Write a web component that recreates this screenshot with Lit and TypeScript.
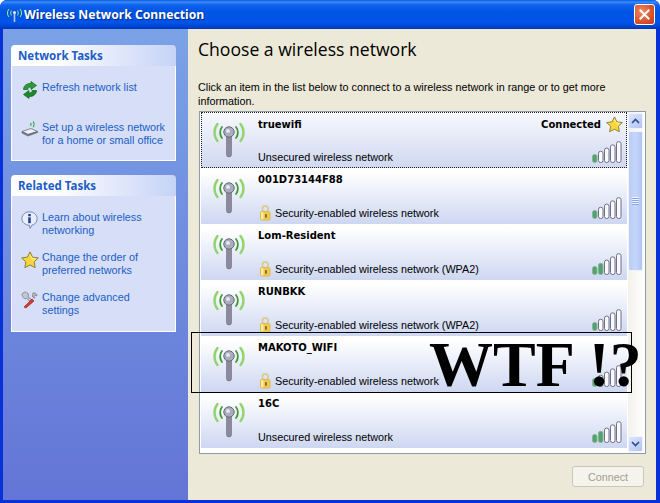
import { LitElement, html, css, svg } from "lit";
import { customElement } from "lit/decorators.js";

const nets = [
  { name: "truewifi", desc: "Unsecured wireless network", lock: false, bars: 1, selected: true },
  { name: "001D73144F88", desc: "Security-enabled wireless network", lock: true, bars: 1 },
  { name: "Lom-Resident", desc: "Security-enabled wireless network (WPA2)", lock: true, bars: 2 },
  { name: "RUNBKK", desc: "Security-enabled wireless network (WPA2)", lock: true, bars: 1 },
  { name: "MAKOTO_WIFI", desc: "Security-enabled wireless network", lock: true, bars: 1 },
  { name: "16C", desc: "Unsecured wireless network", lock: false, bars: 2 },
];

const antenna = html`<svg class="ant" width="36" height="40" viewBox="0 0 36 40">
  <g fill="none" stroke="#8fd46e" stroke-width="2.4" stroke-linecap="round">
    <path d="M6.500 5C2.500 10 2.500 17 6.500 22" /><path d="M29.500 5C33.500 10 33.500 17 29.500 22" />
  </g>
  <g fill="none" stroke="#3f9a2c" stroke-width="1.800" stroke-linecap="round">
    <path d="M11 8C8.500 11 8.500 16 11 19" /><path d="M25 8C27.500 11 27.500 16 25 19" />
  </g>
  <rect x="15.500" y="14" width="5" height="24" rx="2.500" fill="#8a8a9c" stroke="#6b6b80" stroke-width=".6"/>
  <circle cx="18" cy="13" r="5.200" fill="#a9adbd" stroke="#66667c"/>
  <circle cx="17" cy="12" r="2" fill="#e4e6ee"/>
</svg>`;

const lock = html`<svg class="lock" width="14" height="17" viewBox="0 0 14 17">
  <path d="M4.500 8V4.500a2.700 2.700 0 0 1 5.400 0V8" fill="none" stroke="#d8cc96" stroke-width="1.800"/>
  <rect x="2.500" y="7.500" width="9.500" height="8.500" rx="1.500" fill="#f3ca4e" stroke="#e0b040" stroke-width=".8"/>
  <rect x="3.300" y="8.300" width="2" height="7" fill="#fff2b8"/>
  <rect x="7.200" y="10.200" width="1.600" height="3.400" fill="#6b5a1e"/>
</svg>`;

const star = (s: number) => html`<svg width=${s} height=${s} viewBox="0 0 20 20">
  <path d="M10 1l2.800 5.800 6.400.9-4.600 4.400 1.100 6.400L10 15.500l-5.700 3 1.100-6.400L.8 7.700l6.400-.9z" fill="#f9d53e" stroke="#84803a" stroke-width="1.100" stroke-linejoin="round"/>
  <path d="M10 4l1.800 4 4 .5-3 2.700" fill="none" stroke="#fff3a8" stroke-width="1"/>
</svg>`;

const signal = (on: number) => html`<svg class="sig" width="30" height="22" viewBox="0 0 30 22">
  ${[0, 1, 2, 3, 4].map((i) => {
    const h = 8 + i * 3.2;
    const lit = i < on;
    return svg`<rect x=${0.5 + i * 6} y=${21.5 - h} width="4.500" height=${h} rx="2" fill=${lit ? "#4fa36b" : "#fafafd"} stroke=${lit ? "#8fb09a" : "#6f6f88"} stroke-width="1"/>`;
  })}
</svg>`;

const refresh = html`<svg width="18" height="18" viewBox="0 0 18 18">
  <path d="M2.500 8.500C2.500 4.500 6.500 2 10 2.500V0.500l5.500 4-5.500 4V6C8 5.800 6.800 7 6.800 8.500z" fill="#2c9c35" stroke="#0f661c" stroke-width=".7"/>
  <path d="M15.500 9.500c0 4-4 6.500-7.500 6v2l-5.500-4 5.500-4V12c2 .2 3.200-1 3.200-2.500z" fill="#1c8a2a" stroke="#0f661c" stroke-width=".7"/>
</svg>`;

const setup = html`<svg width="18" height="18" viewBox="0 0 18 18">
  <path d="M1 10.500L10 7.500l6.500 3L7 13.500z" fill="#f0f1f6" stroke="#6a7080" stroke-width=".8"/>
  <path d="M1 10.500v1.500l6 3 9.500-3.500v-1L7 13.500z" fill="#7f8598" stroke="#555b6c" stroke-width=".6"/>
  <g fill="none" stroke="#3aa53a" stroke-width="1.100"><path d="M12 .5c1.500 1.500 1.500 4 0 5.500"/><path d="M9.500 2c.8.800.8 2 0 2.800"/></g>
</svg>`;

const info = html`<svg width="17" height="18" viewBox="0 0 16 17">
  <path d="M8 .8c4 0 7.200 2.800 7.200 6.400s-2.400 5.700-5 6.200L8.500 16.500l-.5-3c-4-.1-7.200-2.700-7.200-6.300S4 .8 8 .8z" fill="#e8eefc" stroke="#6d84b8" stroke-width=".9"/>
  <rect x="6.800" y="6" width="2.400" height="5.500" fill="#1e3f8f"/><rect x="6.800" y="2.800" width="2.400" height="2.200" fill="#1e3f8f"/>
</svg>`;

const tools = html`<svg width="18" height="18" viewBox="0 0 18 18">
  <path d="M1 3.500c1-2.500 4-3 5.500-1.500 1.300 1.300 1 3 .5 3.800l5 4-1.500 1.800-5-4.300C4 8.300 1.500 7 1 3.500z" fill="#c6c8d0" stroke="#666a78" stroke-width=".7"/>
  <path d="M3 16l8-8 2 2-8 7z" fill="#d8392b" stroke="#8f1f18" stroke-width=".6"/>
  <path d="M12 2c2-.6 4 .6 4 3l-2-.8-1 1 1 1.800c-2 .4-3.500-1.500-2-5z" fill="#b6b9c4" stroke="#666a78" stroke-width=".6"/>
</svg>`;

const titleIcon = html`<svg width="17" height="14" viewBox="0 0 17 14">
  <g fill="none" stroke="#9ff07a" stroke-width="1"><path d="M3 1C1 3.500 1 6.500 3 9"/><path d="M14 1c2 2.500 2 5.500 0 8"/><path d="M5.500 2.500c-1 1.500-1 3.500 0 5"/><path d="M11.500 2.500c1 1.500 1 3.500 0 5"/></g>
  <rect x="7.700" y="5" width="1.600" height="9" fill="#b9c6e8"/><circle cx="8.500" cy="4.500" r="1.500" fill="#e2e8f8"/>
</svg>`;

@customElement("app-root")
export class AppRoot extends LitElement {
  static styles = css`
    :host { display: block; position: relative; width: 660px; height: 503px; overflow: hidden; background: #fff;
      font-family: "Liberation Sans", sans-serif; font-size: 10.800px; }
    * { box-sizing: border-box; }
    .win { display: flex; flex-direction: column; height: 503px; background: #0831d9; border-radius: 7px 7px 0 0; overflow: hidden; }
    .title { flex: none; height: 29px; display: flex; align-items: center; padding: 0 5px 0 6px; gap: 1px;
      background: linear-gradient(#0a5ae0 0, #3a8cf8 2px, #0e62ee 5px, #0054e3 12px, #0055e8 22px, #0043cf 27px, #0035b5 29px); }
    .title span { flex: 1; color: #fff; font: bold 12.200px "Noto Sans", sans-serif; text-shadow: 1px 1px 1px #0a2a88; }
    .close { width: 21px; height: 21px; border: 1px solid #fff; border-radius: 3px; background: radial-gradient(circle at 35% 35%, #ee8a62, #d8532c 60%, #bf3c18);
      display: flex; align-items: center; justify-content: center; }
    .main { flex: 1; display: flex; margin: 0 4px 3px 3px; min-height: 0; }
    .side { flex: none; width: 185px; padding: 16px 12px 0 8px; display: flex; flex-direction: column; gap: 14px;
      background: linear-gradient(#7ba2e7, #6375d6); }
    .panel-h { height: 21px; padding: 0 0 0 7px; display: flex; align-items: center; border-radius: 4px 4px 0 0;
      background: linear-gradient(90deg, #fff 25%, #c6d3f7); color: #215dc6; font: bold 11.500px "Noto Sans", sans-serif; }
    .panel-b { background: #d6dff7; border: 1px solid #fff; border-top: none; display: flex; flex-direction: column; }
    .net { height: 95px; padding-top: 15px; gap: 22px; }
    .rel { height: 136px; padding-top: 15px; gap: 14px; }
    .task { display: grid; grid-template-columns: 18px 1fr; gap: 3px; padding-left: 9px; color: #215dc6; line-height: 13px; font-size: 10.800px; }
    .content { flex: 1; background: #ece9d8; padding: 8px 11px 0 10px; display: flex; flex-direction: column; min-width: 0; }
    h1 { margin: 0; font: 400 17.600px/24px "Open Sans", sans-serif; color: #000; height: 43px; flex: none; }
    .intro { margin: 0; font-size: 10.800px; line-height: 14px; color: #000; height: 31px; flex: none; }
    .list { height: 343px; flex: none; margin-left: 1px; background: #fff; border: 1px solid #8d9ca8; display: flex; padding-left: 1px; width: 447px; }
    .rows { flex: none; width: 426px; }
    .row { height: 56px; display: grid; grid-template-columns: 57px 1fr; background: linear-gradient(#fff 8%, #cdd7f1); color: #000; }
    .row.sel { outline: 1px dotted #222; outline-offset: -1px; background: linear-gradient(#f8f9fe, #cfd8ef); }
    .row.sel .top { margin-top: -2px; }
    .ant { margin: 7px 0 0 10px; }
    .txt { display: flex; flex-direction: column; justify-content: space-between; padding: 6px 4px 4px 0; }
    .top { display: flex; justify-content: space-between; align-items: center; }
    .name { font: bold 10px "DejaVu Sans", sans-serif; }
    .conn { display: flex; align-items: center; gap: 5px; font: bold 10px "DejaVu Sans", sans-serif; }
    .bot { display: flex; align-items: flex-end; justify-content: space-between; }
    .desc { display: flex; align-items: flex-end; gap: 3px; font-size: 10.800px; line-height: 13px; }
    .lock { flex: none; margin-bottom: -1px; }
    .sig { margin: 0 1px 1px 0; }
    .scroll { flex: none; width: 16px; margin-left: 1px; display: flex; flex-direction: column; padding: 1px 0;
      background: linear-gradient(90deg, #f3f1ec, #fefefb); }
    .sbtn { flex: none; height: 16px; width: 15px; border: 1px solid #eef3ff; border-radius: 2px; background: linear-gradient(135deg, #dce6fd, #b0c4f4);
      display: flex; align-items: center; justify-content: center; }
    .thumb { flex: none; height: 140px; margin-top: 2px; width: 15px; border: 1px solid #eef3ff; border-radius: 2px; background: linear-gradient(90deg, #b8ccf7, #c6d6fb 50%, #b2c6f5);
      display: flex; align-items: center; justify-content: center; }
    .grip { width: 7px; height: 8px; background: repeating-linear-gradient(#eef3ff 0 1px, #8ba6e6 1px 2px); }
    .gap { flex: 1; }
    .foot { display: flex; justify-content: flex-end; padding: 12px 1px 0 0; }
    .btn { width: 72px; height: 21px; border: 1px solid #c9c7ba; border-radius: 3px; background: #f4f3ec; color: #a1a192;
      font-size: 10.800px; display: flex; align-items: center; justify-content: center; }
    .wtf { position: absolute; left: 191px; top: 332px; width: 441px; height: 61px; border: 1px solid #000; overflow: visible; }
    .wtf b { position: absolute; left: 237px; top: -5px; font: bold 64px/74px "Liberation Serif", serif; color: #000; white-space: pre; }
  `;

  render() {
    return html`
      <div class="win">
        <div class="title">
          ${titleIcon}
          <span>Wireless Network Connection</span>
          <div class="close">
            <svg width="11" height="11" viewBox="0 0 11 11"><path d="M1.500 1.500l8 8M9.500 1.500l-8 8" stroke="#fff" stroke-width="2" stroke-linecap="square"/></svg>
          </div>
        </div>
        <div class="main">
          <aside class="side">
            <section>
              <div class="panel-h">Network Tasks</div>
              <div class="panel-b net">
                <div class="task">${refresh}<span>Refresh network list</span></div>
                <div class="task">${setup}<span>Set up a wireless network<br />for a home or small office</span></div>
              </div>
            </section>
            <section>
              <div class="panel-h">Related Tasks</div>
              <div class="panel-b rel">
                <div class="task">${info}<span>Learn about wireless<br />networking</span></div>
                <div class="task">${star(18)}<span>Change the order of<br />preferred networks</span></div>
                <div class="task">${tools}<span>Change advanced<br />settings</span></div>
              </div>
            </section>
          </aside>
          <div class="content">
            <h1>Choose a wireless network</h1>
            <p class="intro">Click an item in the list below to connect to a wireless network in range or to get more information.</p>
            <div class="list">
              <div class="rows">
                ${nets.map((n) => html`
                  <div class="row ${n.selected ? "sel" : ""}">
                    ${antenna}
                    <div class="txt">
                      <div class="top">
                        <span class="name">${n.name}</span>
                        ${n.selected ? html`<span class="conn">Connected ${star(17)}</span>` : ""}
                      </div>
                      <div class="bot">
                        <span class="desc">${n.lock ? lock : ""}${n.desc}</span>
                        ${signal(n.bars)}
                      </div>
                    </div>
                  </div>`)}
              </div>
              <div class="scroll">
                <div class="sbtn"><svg width="9" height="6" viewBox="0 0 9 6"><path d="M1 5l3.500-3.500L8 5" fill="none" stroke="#2d4a8f" stroke-width="1.600"/></svg></div>
                <div class="thumb"><div class="grip"></div></div>
                <div class="gap"></div>
                <div class="sbtn"><svg width="9" height="6" viewBox="0 0 9 6"><path d="M1 1l3.500 3.500L8 1" fill="none" stroke="#2d4a8f" stroke-width="1.600"/></svg></div>
              </div>
            </div>
            <div class="foot"><div class="btn">Connect</div></div>
          </div>
        </div>
      </div>
      <div class="wtf"><b>WTF !?</b></div>
    `;
  }
}
